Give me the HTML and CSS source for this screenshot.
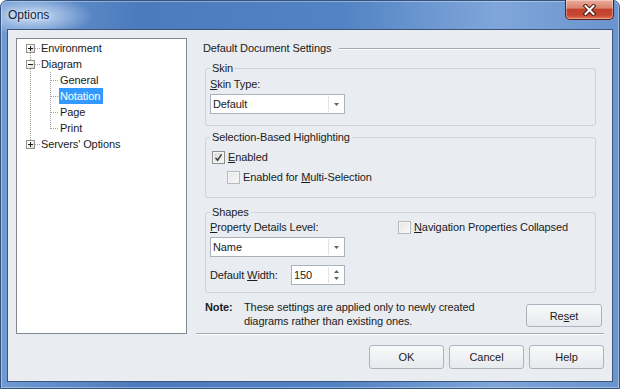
FILE: index.html
```html
<!DOCTYPE html>
<html lang="en">
<head>
    <meta charset="UTF-8">
    <title>Options</title>
    <link rel="stylesheet" href="styles.css">
</head>
<body>

    <div class="window">
        <div class="titlebar">
            <span class="title">Options</span>
            <button class="close">
                <svg width="15" height="12" viewBox="0 0 15 12">
                    <path d="M3.5 2 L11.5 10 M11.5 2 L3.5 10" stroke="#4a1711" stroke-width="4" stroke-linecap="square"/>
                    <path d="M3.5 2 L11.5 10 M11.5 2 L3.5 10" stroke="#fff" stroke-width="2" stroke-linecap="square"/>
                </svg>
            </button>
        </div>

        <div class="client">
            <div class="main">
                <div class="tree-box">
                    <ul class="tree">
                        <li>
                            <div class="node">
                                <span class="exp"><svg width="7" height="7"><path d="M1 3.5h5M3.5 1v5" stroke="#1b1b1b"/></svg></span>
                                <span class="stub"></span>
                                <span class="text">Environment</span>
                            </div>
                        </li>
                        <li>
                            <div class="node">
                                <span class="exp"><svg width="7" height="7"><path d="M1 3.5h5" stroke="#1b1b1b"/></svg></span>
                                <span class="stub"></span>
                                <span class="text">Diagram</span>
                            </div>
                            <ul class="children">
                                <li class="leaf"><span class="text">General</span></li>
                                <li class="leaf"><span class="text sel">Notation</span></li>
                                <li class="leaf"><span class="text">Page</span></li>
                                <li class="leaf"><span class="text">Print</span></li>
                            </ul>
                        </li>
                        <li>
                            <div class="node">
                                <span class="exp"><svg width="7" height="7"><path d="M1 3.5h5M3.5 1v5" stroke="#1b1b1b"/></svg></span>
                                <span class="stub"></span>
                                <span class="text">Servers' Options</span>
                            </div>
                        </li>
                    </ul>
                </div>

                <div class="panel">
                    <div class="heading">
                        <span>Default Document Settings</span>
                        <span class="rule"></span>
                    </div>

                    <fieldset class="group skin">
                        <legend>Skin</legend>
                        <div class="field-label"><u>S</u>kin Type:</div>
                        <div class="combo">
                            <span class="value">Default</span>
                            <span class="drop"><svg width="5" height="3"><path d="M0 0h5L2.5 3z" fill="#5f6266"/></svg></span>
                        </div>
                    </fieldset>

                    <fieldset class="group selection">
                        <legend>Selection-Based Highlighting</legend>
                        <label class="check-row">
                            <span class="box checked"><svg width="9" height="9"><path d="M1.5 4.8L3.6 7.2L7.5 1.3" fill="none" stroke="#3a3a3a" stroke-width="1.5"/></svg></span>
                            <span><u>E</u>nabled</span>
                        </label>
                        <label class="check-row indent">
                            <span class="box"></span>
                            <span>Enabled for <u>M</u>ulti-Selection</span>
                        </label>
                    </fieldset>

                    <fieldset class="group shapes">
                        <legend>Shapes</legend>
                        <div class="shape-body">
                            <div class="shape-left">
                                <div class="field-label"><u>P</u>roperty Details Level:</div>
                                <div class="combo">
                                    <span class="value">Name</span>
                                    <span class="drop"><svg width="5" height="3"><path d="M0 0h5L2.5 3z" fill="#5f6266"/></svg></span>
                                </div>
                                <div class="width-row">
                                    <span class="width-label">Default <u>W</u>idth:</span>
                                    <div class="spin">
                                        <span class="value">150</span>
                                        <span class="arrows">
                                            <svg width="5" height="3"><path d="M2.5 0L5 3H0z" fill="#5f6266"/></svg>
                                            <svg width="5" height="3"><path d="M0 0h5L2.5 3z" fill="#5f6266"/></svg>
                                        </span>
                                    </div>
                                </div>
                            </div>
                            <label class="nav-check">
                                <span class="box"></span>
                                <span><u>N</u>avigation Properties Collapsed</span>
                            </label>
                        </div>
                    </fieldset>

                    <div class="note">
                        <span class="note-title">Note:</span>
                        <span class="note-text">These settings are applied only to newly created<br>diagrams rather than existing ones.</span>
                        <button class="btn reset">Re<u>s</u>et</button>
                    </div>
                </div>
            </div>

            <div class="buttons">
                <button class="btn">OK</button>
                <button class="btn">Cancel</button>
                <button class="btn">Help</button>
            </div>
        </div>
    </div>

</body>
</html>
```

FILE: styles.css
```css
* {
    box-sizing: border-box;
}
body {
    margin: 0;
    background: #fff;
    font-family: "Liberation Sans", Arial, sans-serif;
    font-size: 11px;
    line-height: 14px;
    letter-spacing: -0.1px;
    color: #1b1b1b;
}
u {
    text-decoration-thickness: 1px;
    text-underline-offset: 1px;
}

/* window frame */
.window {
    width: 620px;
    height: 389px;
    border: 1px solid #34547f;
    border-radius: 7px 7px 0 0;
    background:
        radial-gradient(ellipse 60px 20px at 32px 15px, rgba(214, 230, 248, 0.9), rgba(214, 230, 248, 0)),
        linear-gradient(to right, #6f9ad3 0%, #4c7bbd 22%, #5283c4 55%, #80a6da 80%, #6a94ce 100%);
    box-shadow: inset 0 0 0 1px rgba(255, 255, 255, 0.35);
    display: flex;
    flex-direction: column;
}
.titlebar {
    height: 28px;
    display: flex;
    align-items: flex-start;
}
.title {
    margin: 7px 0 0 7px;
    font-size: 12px;
    line-height: 15px;
    letter-spacing: 0;
    color: #14243c;
    text-shadow: 0 0 5px rgba(255, 255, 255, 0.9);
}
.close {
    width: 49px;
    height: 20px;
    margin: -1px 5px 0 auto;
    padding: 0;
    border: 1px solid #5e2018;
    border-top: none;
    border-radius: 0 0 5px 5px;
    background: linear-gradient(#eaac9d 0%, #d9846f 42%, #c3412d 50%, #c54631 78%, #de7353 100%);
    box-shadow: inset 0 0 0 1px rgba(255, 255, 255, 0.35);
    display: flex;
    align-items: center;
    justify-content: center;
}

.client {
    height: 353px;
    margin: 0 6px 6px;
    padding: 8px 8px 0;
    border: 1px solid #3b5478;
    background: #e9ecf1;
}
.main {
    display: flex;
    height: 296px;
}

/* tree */
.tree-box {
    width: 171px;
    height: 296px;
    padding-top: 1px;
    border: 1px solid #828790;
    background: #fff;
}
.tree, .children {
    list-style: none;
    margin: 0;
    padding: 0;
}
.tree {
    background: repeating-linear-gradient(to bottom, #a0a0a0 0 1px, transparent 1px 2px) 13px 13px / 1px 87px no-repeat;
}
.node {
    display: flex;
    align-items: center;
    height: 16px;
    padding-left: 9px;
}
.exp {
    width: 9px;
    height: 9px;
    border: 1px solid #919191;
    background: linear-gradient(135deg, #fff 30%, #d6d6d6);
    display: flex;
}
.stub {
    width: 5px;
    height: 1px;
    background: repeating-linear-gradient(to right, #a0a0a0 0 1px, transparent 1px 2px);
}
.text {
    display: inline-block;
    height: 16px;
    line-height: 16px;
    padding: 0 3px 0 1px;
}
.children {
    background: repeating-linear-gradient(to bottom, #a0a0a0 0 1px, transparent 1px 2px) 33px 0 / 1px 57px no-repeat;
}
.leaf {
    height: 16px;
    padding-left: 42px;
    background: repeating-linear-gradient(to right, #a0a0a0 0 1px, transparent 1px 2px) 34px 8px / 7px 1px no-repeat;
}
.sel {
    background: #3399ff;
    color: #fff;
}

/* right panel */
.panel {
    flex: 1;
    margin-left: 9px;
    display: flex;
    flex-direction: column;
    border-bottom: 1px solid #a3abb5;
    box-shadow: 0 1px 0 #fff;
}
.heading {
    display: flex;
    align-items: center;
    height: 14px;
    margin-top: 3px;
    padding-left: 7px;
}
.rule {
    flex: 1;
    margin: 0 4px 0 8px;
    border-top: 1px solid #a3abb5;
    box-shadow: 0 1px 0 #fff;
}
.group {
    margin: 0 8px 0 9px;
    padding: 0 4px;
    min-width: 0;
    border: 1px solid #cbd3dc;
    border-radius: 3px;
}
.group legend {
    padding: 0 2px;
    line-height: 15px;
}
.skin {
    margin-top: 6px;
    padding-bottom: 11px;
}
.selection {
    margin-top: 4px;
    padding-bottom: 10px;
}
.shapes {
    margin-top: 7px;
    padding-bottom: 7px;
}
.field-label {
    margin-top: 1px;
}
.shapes .field-label {
    margin-top: 0;
}
.combo {
    display: flex;
    width: 135px;
    height: 20px;
    margin-top: 3px;
    border: 1px solid #abb2bb;
    background: #fff;
}
.value {
    flex: 1;
    padding-left: 2px;
    line-height: 18px;
}
.drop {
    width: 16px;
    margin: 1px 0;
    border-left: 1px solid #dfe3e8;
    display: flex;
    align-items: center;
    justify-content: center;
}

/* checkboxes */
.check-row {
    display: flex;
    align-items: center;
    gap: 3px;
    height: 20px;
    padding-left: 2px;
}
.check-row:first-of-type {
    margin-top: 2px;
}
.check-row.indent {
    padding-left: 17px;
}
.box {
    width: 13px;
    height: 13px;
    border: 1px solid #b5b8bc;
    background: linear-gradient(135deg, #e6e6e6, #f8f8f8);
    box-shadow: inset 0 0 0 1px #f6f6f6;
    display: flex;
    align-items: center;
    justify-content: center;
}
.box.checked {
    border-color: #8e8f8f;
    background: linear-gradient(135deg, #dcdcdc, #f6f6f6);
}

.shape-body {
    display: flex;
}
.shape-left {
    width: 135px;
}
.nav-check {
    display: flex;
    align-items: center;
    gap: 3px;
    height: 14px;
    margin-left: 53px;
}
.width-row {
    display: flex;
    align-items: center;
    margin-top: 8px;
    height: 20px;
}
.width-label {
    width: 81px;
}
.spin {
    display: flex;
    width: 54px;
    height: 20px;
    border: 1px solid #abb2bb;
    background: #fff;
}
.arrows {
    width: 16px;
    margin: 1px 0;
    border-left: 1px solid #dfe3e8;
    display: flex;
    flex-direction: column;
    align-items: center;
    justify-content: center;
    gap: 4px;
}

/* note */
.note {
    display: flex;
    align-items: flex-start;
    margin-top: 7px;
    padding-left: 9px;
}
.note-title {
    width: 39px;
    font-weight: bold;
}

/* buttons */
.btn {
    width: 75px;
    height: 24px;
    padding: 0;
    border: 1px solid #acb3bc;
    border-radius: 3px;
    background: linear-gradient(#f8f9fa, #e7eaee);
    font: inherit;
    color: #1b1b1b;
}
.reset {
    width: 76px;
    height: 23px;
    margin: 4px 2px 0 auto;
}
.buttons {
    display: flex;
    justify-content: flex-end;
    gap: 5px;
    margin-top: 11px;
}
```
